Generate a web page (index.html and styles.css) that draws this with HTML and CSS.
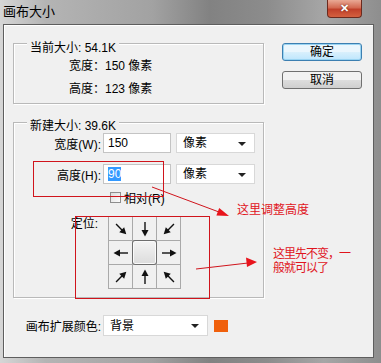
FILE: index.html
```html
<!DOCTYPE html>
<html lang="zh-CN">
<head>
    <meta charset="UTF-8">
    <title>画布大小</title>
    <link rel="stylesheet" href="styles.css">
</head>
<body>
    <div class="window">
        <div class="titlebar">
            <span class="title">画布大小</span>
            <span class="close">✕</span>
        </div>

        <div class="client">
            <div class="left">
                <!-- 当前大小 -->
                <div class="group group-current">
                    <div class="legend">当前大小: 54.1K</div>
                    <div class="info">宽度：150 像素</div>
                    <div class="info">高度：123 像素</div>
                </div>

                <!-- 新建大小 -->
                <div class="group group-new">
                    <div class="legend">新建大小: 39.6K</div>
                    <div class="row">
                        <span class="label">宽度(W):</span>
                        <span class="field">150</span>
                        <span class="select">像素<i class="caret"></i></span>
                    </div>
                    <div class="row row-second">
                        <span class="label">高度(H):</span>
                        <span class="field"><span class="sel">90</span></span>
                        <span class="select">像素<i class="caret"></i></span>
                    </div>
                    <div class="row-check">
                        <span class="box"></span>相对(R)
                    </div>
                    <div class="row-anchor">
                        <span class="label">定位:</span>
                        <div class="anchor">
                            <span class="cell"><svg class="arr d45" viewBox="0 0 16 16"><path d="M1 8H10"/><polygon points="9,4.5 15.5,8 9,11.5"/></svg></span>
                            <span class="cell"><svg class="arr d90" viewBox="0 0 16 16"><path d="M1 8H10"/><polygon points="9,4.5 15.5,8 9,11.5"/></svg></span>
                            <span class="cell"><svg class="arr d135" viewBox="0 0 16 16"><path d="M1 8H10"/><polygon points="9,4.5 15.5,8 9,11.5"/></svg></span>
                            <span class="cell"><svg class="arr d180" viewBox="0 0 16 16"><path d="M1 8H10"/><polygon points="9,4.5 15.5,8 9,11.5"/></svg></span>
                            <span class="cell center"></span>
                            <span class="cell"><svg class="arr d0" viewBox="0 0 16 16"><path d="M1 8H10"/><polygon points="9,4.5 15.5,8 9,11.5"/></svg></span>
                            <span class="cell"><svg class="arr d315" viewBox="0 0 16 16"><path d="M1 8H10"/><polygon points="9,4.5 15.5,8 9,11.5"/></svg></span>
                            <span class="cell"><svg class="arr d270" viewBox="0 0 16 16"><path d="M1 8H10"/><polygon points="9,4.5 15.5,8 9,11.5"/></svg></span>
                            <span class="cell"><svg class="arr d225" viewBox="0 0 16 16"><path d="M1 8H10"/><polygon points="9,4.5 15.5,8 9,11.5"/></svg></span>
                        </div>
                    </div>
                </div>

                <div class="row row-ext">
                    <span class="label">画布扩展颜色:</span>
                    <span class="select select-wide">背景<i class="caret"></i></span>
                    <span class="swatch"></span>
                </div>
            </div>

            <div class="right">
                <span class="btn btn-default">确定</span>
                <span class="btn">取消</span>
            </div>
        </div>

        <!-- 标注 -->
        <svg class="marks" width="381" height="363" viewBox="0 0 381 363">
            <rect x="33.5" y="161.5" width="130" height="35"/>
            <rect x="75.5" y="216.5" width="134" height="82"/>
            <line x1="152" y1="187" x2="219" y2="212"/>
            <polygon points="229,216 219.2,208.1 216.4,215.5"/>
            <line x1="196" y1="269" x2="248" y2="263"/>
            <polygon points="257,262 246,257.5 247,267"/>
        </svg>
        <div class="note note-height">这里调整高度</div>
        <div class="note note-anchor">
            <div>这里先不变，一</div>
            <div>般就可以了</div>
        </div>
    </div>
</body>
</html>
```

FILE: styles.css
```css
body {
    margin: 0;
    font-family: "Liberation Sans", "Noto Sans CJK SC", sans-serif;
    font-size: 12px;
    color: #000;
    background: #fff;
}

.window {
    position: relative;
    width: 381px;
    height: 363px;
    background: linear-gradient(to right, #d6d6d6 0, #b4b4b4 12%, #a2a2a2 40%, #828282 55%, #8c8c8c 70%, #a6a6a6 85%, #8e8e8e 100%);
    overflow: hidden;
}

.titlebar {
    display: flex;
    align-items: flex-start;
    height: 24px;
}

.title {
    padding: 4px 0 0 3px;
    font-size: 13px;
    line-height: 15px;
}

.close {
    margin: 0 19px 0 auto;
    width: 35px;
    height: 18px;
    box-sizing: border-box;
    border: 1px solid #6b2a1e;
    border-top: none;
    border-radius: 0 0 4px 4px;
    background: linear-gradient(#e9a995, #d36a52 45%, #c0402a 55%, #d4603f);
    color: #fff;
    font-size: 11px;
    font-weight: bold;
    line-height: 17px;
    text-align: center;
    text-shadow: 0 0 2px #5a1a10;
}

.client {
    display: flex;
    box-sizing: border-box;
    height: 334px;
    margin: 0 7px 0 3px;
    padding: 12px 0 0 9px;
    border: 1px solid #5e5e5e;
    box-shadow: inset 1px 1px 0 #fff;
    background: #f0f0f0;
}

.left {
    width: 251px;
}

.group {
    border: 1px solid #b9b9b9;
    box-shadow: 1px 1px 0 #fff, inset 1px 1px 0 #fff;
}

.legend {
    width: max-content;
    margin: -8px 0 0 13px;
    padding: 0 3px;
    line-height: 14px;
    background: #f0f0f0;
}

.group-current {
    margin-top: 6px;
    padding: 5px 0 2px 0;
}

.info {
    padding-left: 55px;
    line-height: 23px;
}

.group-new {
    margin-top: 18px;
    padding: 4px 0 8px 0;
}

.row {
    display: flex;
    align-items: center;
    height: 20px;
}

.row-second {
    margin-top: 11px;
}

.label {
    width: 87px;
    margin-right: 2px;
    text-align: right;
    white-space: nowrap;
}

.field {
    box-sizing: border-box;
    width: 68px;
    height: 20px;
    padding: 2px 0 0 4px;
    border: 1px solid #c4c4c4;
    background: #fff;
    line-height: 15px;
}

.sel {
    background: #3399ff;
    color: #fff;
}

.select {
    position: relative;
    box-sizing: border-box;
    width: 79px;
    height: 20px;
    margin-left: 5px;
    padding: 2px 0 0 6px;
    border: 1px solid #d8d8d8;
    background: #fff;
    line-height: 15px;
}

.caret {
    position: absolute;
    right: 8px;
    top: 8px;
    border-left: 4px solid transparent;
    border-right: 4px solid transparent;
    border-top: 4px solid #222;
}

.row-check {
    display: flex;
    align-items: center;
    height: 18px;
    margin: 4px 0 0 96px;
}

.box {
    box-sizing: border-box;
    width: 11px;
    height: 11px;
    margin-right: 3px;
    border: 1px solid #8e8e8e;
    background: linear-gradient(135deg, #dcdcdc, #fdfdfd);
}

.row-anchor {
    display: flex;
    align-items: flex-start;
    margin-top: 10px;
}

.row-anchor .label {
    width: 84px;
    margin-right: 10px;
    padding-top: 1px;
    line-height: 14px;
    text-align: right;
}

.anchor {
    display: grid;
    grid-template-columns: repeat(3, 23px);
    grid-template-rows: repeat(3, 23px);
    gap: 1px;
    padding: 1px;
    background: #a9a9a9;
}

.cell {
    display: flex;
    align-items: center;
    justify-content: center;
    background: #f0f0f0;
}

.cell.center {
    margin: -1px;
    border: 1px solid #6e6e6e;
    border-radius: 3px;
    background: linear-gradient(#f4f4f4, #dcdcdc);
    box-shadow: inset 0 0 0 1px #fafafa;
}

.arr {
    width: 16px;
    height: 16px;
}

.arr path {
    stroke: #111;
    stroke-width: 1.4;
    fill: none;
}

.arr polygon {
    fill: #111;
}

.d0 { transform: rotate(0deg); }
.d45 { transform: rotate(45deg); }
.d90 { transform: rotate(90deg); }
.d135 { transform: rotate(135deg); }
.d180 { transform: rotate(180deg); }
.d225 { transform: rotate(225deg); }
.d270 { transform: rotate(270deg); }
.d315 { transform: rotate(315deg); }

.row-ext {
    height: 21px;
    margin-top: 17px;
}

.row-ext .label {
    width: 88px;
    margin-right: 2px;
}

.select-wide {
    width: 105px;
    height: 21px;
    margin-left: 0;
    padding-top: 3px;
}

.swatch {
    width: 14px;
    height: 12px;
    margin-left: 6px;
    background: #f0600c;
}

.right {
    display: flex;
    flex-direction: column;
    gap: 10px;
    margin-left: 18px;
    padding-top: 6px;
}

.btn {
    box-sizing: border-box;
    width: 80px;
    height: 18px;
    border: 1px solid #707070;
    border-radius: 3px;
    background: linear-gradient(#f2f2f2 50%, #dddddd 50%, #cfcfcf);
    line-height: 16px;
    text-align: center;
}

.btn-default {
    border-color: #3c7fb1;
    box-shadow: inset 0 0 0 1px #9ad4f2;
    background: linear-gradient(#eaf6fd 50%, #d9f0fc 50%, #bee6fd);
}

.marks {
    position: absolute;
    left: 0;
    top: 0;
    pointer-events: none;
}

.marks rect {
    fill: none;
    stroke: #d0141c;
    stroke-width: 1;
}

.marks line {
    stroke: #d0141c;
    stroke-width: 1;
}

.marks polygon {
    fill: #e8141c;
}

.note {
    position: absolute;
    color: #e0141c;
    font-family: "Liberation Sans", "Noto Sans CJK SC", sans-serif;
    font-size: 12px;
    line-height: 14px;
    white-space: nowrap;
}

.note-height {
    left: 237px;
    top: 203px;
}

.note-anchor {
    left: 273px;
    top: 247px;
    letter-spacing: -1px;
}
```
